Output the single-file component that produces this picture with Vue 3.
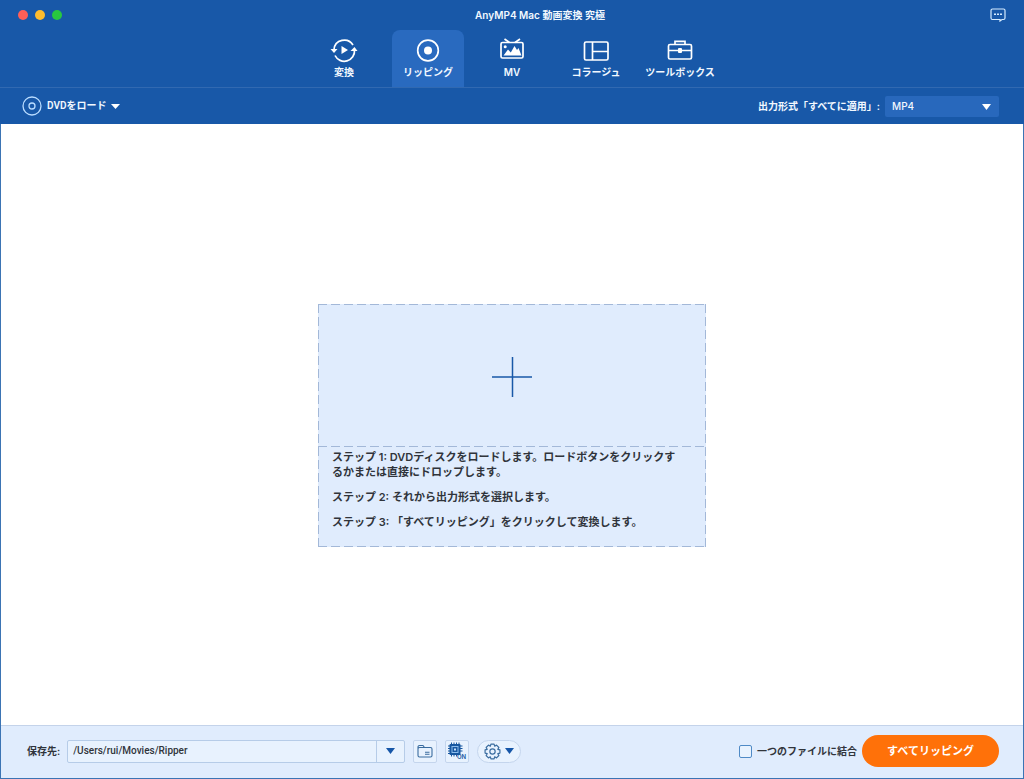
<script setup>
import { ref } from 'vue'

const active = ref('ripper')
const tabs = [
  { id: 'convert', label: '変換' },
  { id: 'ripper', label: 'リッピング' },
  { id: 'mv', label: 'MV' },
  { id: 'collage', label: 'コラージュ' },
  { id: 'toolbox', label: 'ツールボックス' },
]
const format = ref('MP4')
const path = ref('/Users/rui/Movies/Ripper')
const merge = ref(false)
</script>

<template>
  <div class="window">
    <header class="header">
      <div class="titlebar">
        <div class="lights">
          <button class="light red" aria-label="閉じる"></button>
          <button class="light yellow" aria-label="最小化"></button>
          <button class="light green" aria-label="拡大"></button>
        </div>
        <h1 class="title">AnyMP4 Mac 動画変換 究極</h1>
        <button class="feedback" aria-label="フィードバック">
          <svg width="16" height="14" viewBox="0 0 16 14" fill="none" stroke="#d6ecff">
            <path d="M2.500 1h11a1.500 1.500 0 0 1 1.500 1.500v7.500a1.500 1.500 0 0 1-1.500 1.500h-1.500l-2 1.500v-1.500H2.500A1.500 1.500 0 0 1 1 10V2.500A1.500 1.500 0 0 1 2.500 1z" stroke-width="1.200" />
            <path d="M4 6.200h2M7 6.200h2M10 6.200h2" stroke-width="1.600" />
          </svg>
        </button>
      </div>

      <nav class="tabs">
        <button
          v-for="tab in tabs"
          :key="tab.id"
          class="tab"
          :class="{ active: active === tab.id }"
          @click="active = tab.id"
        >
          <svg width="28" height="26" viewBox="0 0 28 26" fill="none" stroke="#fff" stroke-width="1.700">
            <template v-if="tab.id === 'convert'">
              <path d="M4 12.500A10.300 10.300 0 0 1 23 8" />
              <path d="M24.500 13A10.300 10.300 0 0 1 5 18.500" />
              <path d="M.5 12h7L4 16zM20.500 14h7L24.500 10z" fill="#fff" stroke="none" />
              <path d="M11.500 9v8l6.500-4z" fill="#fff" stroke="none" />
            </template>
            <template v-else-if="tab.id === 'ripper'">
              <circle cx="14" cy="13.500" r="10.300" />
              <circle cx="14" cy="13.500" r="4" fill="#fff" stroke="none" />
            </template>
            <template v-else-if="tab.id === 'mv'">
              <rect x="3" y="5.500" width="22" height="15.500" rx="1.500" />
              <path d="M6.500 2l5 3.500M22 2l-5 3.500" />
              <circle cx="7.200" cy="9.700" r="1.500" fill="#fff" stroke="none" />
              <path d="M5.500 18.500l4.500-6 2.800 3 3.700-6.500 2.500 4 1.500-2 3 7.500z" fill="#fff" stroke="none" />
            </template>
            <template v-else-if="tab.id === 'collage'">
              <rect x="2.500" y="5" width="23.500" height="18" rx="1.500" />
              <path d="M10.500 5v18M10.500 14.500H26" />
            </template>
            <template v-else>
              <rect x="2.500" y="7.500" width="23" height="14.500" rx="1.500" />
              <path d="M9 7.500V4.300h10v3.200M2.500 13.500h23" />
              <rect x="12" y="11" width="4" height="5" rx="1" fill="#fff" stroke="none" />
            </template>
          </svg>
          <span>{{ tab.label }}</span>
        </button>
      </nav>

      <div class="toolbar">
        <button class="load">
          <svg width="20" height="20" viewBox="0 0 20 20" fill="none" stroke="#b9dcff" stroke-width="1.300">
            <circle cx="10" cy="10" r="9" />
            <circle cx="10" cy="10" r="3" />
          </svg>
          <span>DVDをロード</span>
          <svg width="9" height="5" viewBox="0 0 9 5"><path d="M0 0h9L4.500 5z" fill="#fff" /></svg>
        </button>
        <div class="format">
          <label for="format">出力形式「すべてに適用」:</label>
          <div class="select-wrap">
            <select id="format" v-model="format">
              <option>MP4</option>
            </select>
            <svg class="select-caret" width="9" height="6" viewBox="0 0 9 6"><path d="M0 0h9L4.500 6z" fill="#fff" /></svg>
          </div>
        </div>
      </div>
    </header>

    <main class="content">
      <section class="drop">
        <button class="add" aria-label="DVDをロード">
          <svg width="40" height="40" viewBox="0 0 40 40" stroke="#1858a8" stroke-width="1.500">
            <path d="M0 20h40M20.500 0v40" />
          </svg>
        </button>
        <div class="steps">
          <p>ステップ 1: DVDディスクをロードします。ロードボタンをクリックするかまたは直接にドロップします。</p>
          <p>ステップ 2: それから出力形式を選択します。</p>
          <p>ステップ 3: 「すべてリッピング」をクリックして変換します。</p>
        </div>
      </section>
    </main>

    <footer class="footer">
      <label class="dest-label" for="dest">保存先:</label>
      <div class="dest">
        <input id="dest" v-model="path" type="text" />
        <button class="dest-caret" aria-label="保存先の履歴">
          <svg width="9" height="6" viewBox="0 0 9 6"><path d="M0 0h9L4.500 6z" fill="#1656a8" /></svg>
        </button>
      </div>
      <button class="tool" aria-label="フォルダを開く">
        <svg width="16" height="14" viewBox="0 0 16 14" fill="none" stroke="#3a6c9f" stroke-width="1.100">
          <path d="M1 11.500v-8.500A1.500 1.500 0 0 1 2.500 1.500h3.500l1.500 2h6A1.500 1.500 0 0 1 15 5v6.500a1.500 1.500 0 0 1-1.500 1.500h-11A1.500 1.500 0 0 1 1 11.500zM1 5q0-1.500 1.500-1.500h5M8 8.300h4.500M8 10.300h4.500" />
        </svg>
      </button>
      <button class="tool" aria-label="ハードウェアアクセラレーション">
        <svg class="chip" width="22" height="20" viewBox="0 0 22 20" fill="none" stroke="#1656a0">
          <path d="M5.500 1.500v14M8 1.500v14M10.500 1.500v14M13 1.500v10M2 5h14.500M2 7.500h14.500M2 10h14.500M2 12.500h9" />
          <rect x="3.500" y="3" width="11" height="11" rx="1" fill="#1656a0" stroke="none" />
          <rect x="6" y="5.500" width="6" height="6" stroke="#8bbcec" />
          <rect x="8" y="7.500" width="2" height="2" fill="#c8e2ff" stroke="none" />
          <text x="11" y="18" class="on">ON</text>
        </svg>
      </button>
      <button class="settings" aria-label="設定">
        <svg width="17" height="17" viewBox="0 0 16 16" fill="none" stroke="#3a6c9f" stroke-width="1.100">
          <path d="M6.500 1h3l.5 2 1.800-1 2.200 2.200-1 1.800 2 .5v3l-2 .5 1 1.800-2.200 2.200-1.800-1-.5 2h-3L6 13l-1.800 1L2 11.800 3 10l-2-.5v-3L3 6 2 4.200 4.200 2 6 3z" stroke-linejoin="round" />
          <circle cx="8" cy="8" r="2.500" />
        </svg>
        <svg width="9" height="6" viewBox="0 0 9 6"><path d="M0 0h9L4.500 6z" fill="#1656a8" /></svg>
      </button>
      <label class="merge">
        <input v-model="merge" type="checkbox" />
        <span>一つのファイルに結合</span>
      </label>
      <button class="rip">すべてリッピング</button>
    </footer>
  </div>
</template>

<style>
html,
body {
  margin: 0;
}
</style>

<style scoped>
.window {
  display: flex;
  flex-direction: column;
  min-height: 100vh;
  box-sizing: border-box;
  border: 1px solid #3b74b4;
  border-top: 0;
  background: #fff;
  color: #30343b;
  font-family: Inter, "Noto Sans CJK JP", sans-serif;
  font-size: 10px;
  font-weight: 600;
  line-height: 16px;
}
button,
input,
select {
  font: inherit;
  color: inherit;
  margin: 0;
  padding: 0;
  border: 0;
  background: none;
  box-sizing: border-box;
}
svg {
  display: block;
  flex: none;
}
.header {
  margin: 0 -1px;
  background: #1858a8;
  color: #f2f8ff;
}
.titlebar {
  display: grid;
  grid-template-columns: 1fr auto 1fr;
  align-items: center;
  height: 30px;
  padding: 0 18px;
}
.lights {
  display: flex;
  gap: 7px;
}
.light {
  width: 10px;
  height: 10px;
  border-radius: 50%;
}
.red {
  background: #ff5f57;
}
.yellow {
  background: #febc2e;
}
.green {
  background: #28c840;
}
.title {
  margin: 0;
  padding-left: 56px;
  font-size: 10px;
  font-weight: 600;
}
.feedback {
  justify-self: end;
}
.tabs {
  display: flex;
  justify-content: center;
  gap: 12px;
  border-bottom: 1px solid #3169b1;
}
.tab {
  display: flex;
  flex-direction: column;
  align-items: center;
  gap: 1px;
  width: 72px;
  height: 57px;
  padding-top: 7px;
  border-radius: 8px 8px 0 0;
  white-space: nowrap;
}
.tab.active {
  background: #296abf;
}
.toolbar {
  display: flex;
  align-items: center;
  justify-content: space-between;
  height: 36px;
  padding: 0 25px 0 22px;
}
.load {
  display: flex;
  align-items: center;
  gap: 5px;
  font-family: Roboto, "Noto Sans CJK JP", sans-serif;
}
.format {
  display: flex;
  align-items: center;
  gap: 5px;
}
.select-wrap {
  position: relative;
}
.select-wrap select {
  display: block;
  appearance: none;
  width: 114px;
  height: 21px;
  padding-left: 7px;
  border-radius: 2px;
  background: #2868bc;
  font-weight: 500;
}
.select-caret {
  position: absolute;
  right: 8px;
  top: 8px;
  pointer-events: none;
}
.content {
  flex: 1;
  display: flex;
  align-items: center;
  justify-content: center;
  padding-top: 2px;
}
.drop {
  --dash: #a3b8d8;
  width: 388px;
  background:
    repeating-linear-gradient(90deg, var(--dash) 0 9px, transparent 9px 13px) top / 100% 1px no-repeat,
    repeating-linear-gradient(90deg, var(--dash) 0 9px, transparent 9px 13px) bottom / 100% 1px no-repeat,
    repeating-linear-gradient(var(--dash) 0 9px, transparent 9px 13px) left / 1px 100% no-repeat,
    repeating-linear-gradient(var(--dash) 0 9px, transparent 9px 13px) right / 1px 100% no-repeat,
    #e0ecfd;
}
.add {
  display: flex;
  align-items: center;
  justify-content: center;
  width: 100%;
  height: 143px;
  padding-top: 2px;
  background: repeating-linear-gradient(90deg, var(--dash) 0 9px, transparent 9px 13px) bottom / 100% 1px no-repeat;
}
.steps {
  padding: 3px 24px 17px 14px;
  font-size: 11px;
  line-height: 15px;
}
.steps p {
  margin: 0 0 10px;
}
.steps p:last-child {
  margin: 0;
}
.footer {
  display: flex;
  align-items: center;
  height: 53px;
  box-sizing: border-box;
  padding: 0 24px 2px 26px;
  border-top: 1px solid #c4d3ea;
  background: #e0ecfd;
}
.dest-label {
  margin-right: 7px;
}
.dest {
  display: flex;
  width: 338px;
  height: 23px;
  box-sizing: border-box;
  border: 1px solid #b6cce8;
  border-radius: 2px;
  background: #e8f2fe;
}
.dest input {
  flex: 1;
  min-width: 0;
  padding-left: 5px;
  font-family: Roboto, sans-serif;
  font-weight: 500;
}
.dest-caret {
  display: flex;
  align-items: center;
  justify-content: center;
  width: 28px;
  border-left: 1px solid #b6cce8;
}
.tool,
.settings {
  display: flex;
  align-items: center;
  justify-content: center;
  height: 23px;
  margin-left: 8px;
  border: 1px solid #c4d5ed;
  border-radius: 2px;
  background: #e8f2fe;
}
.tool {
  width: 24px;
}
.settings {
  width: 44px;
  gap: 4px;
  border-radius: 12px;
}
.on {
  font: 600 6px Inter, sans-serif;
  fill: #1656a0;
  stroke: none;
}
.merge {
  display: flex;
  align-items: center;
  gap: 5px;
  margin-left: auto;
}
.merge input {
  appearance: none;
  width: 13px;
  height: 13px;
  border: 1px solid #4f8ac6;
  border-radius: 2px;
  background: #e8f2fe;
}
.rip {
  width: 137px;
  height: 32px;
  margin-left: 5px;
  border-radius: 16px;
  background: #ff7109;
  color: #fff;
  font-size: 11px;
}
</style>
